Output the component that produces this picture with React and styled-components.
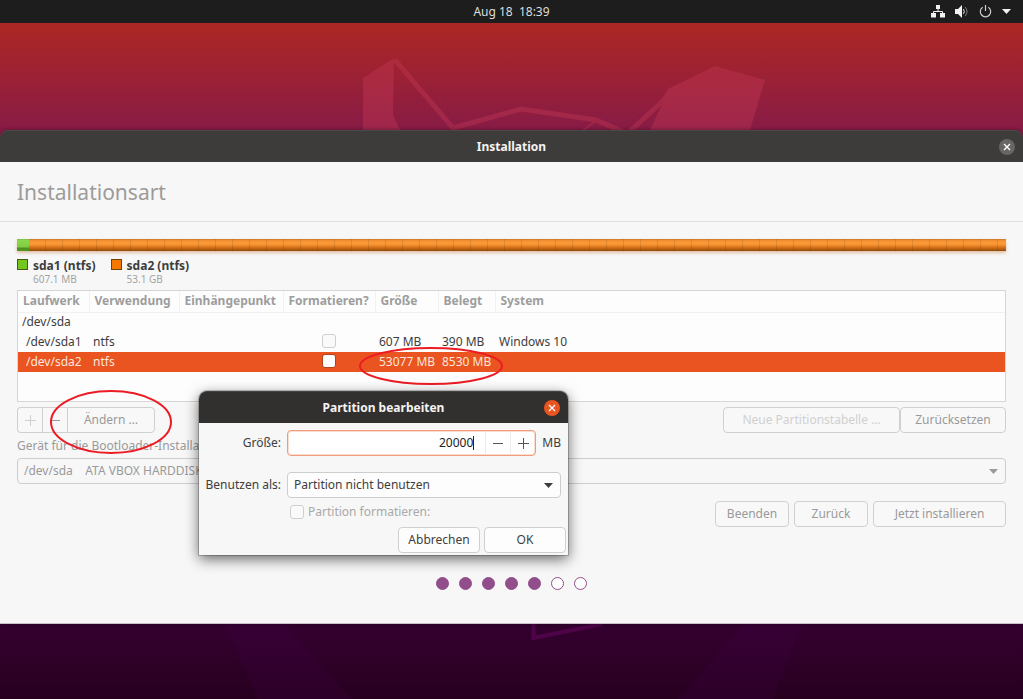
import React from "react";
import styled, { createGlobalStyle } from "styled-components";

const GlobalStyle = createGlobalStyle`
  *, *::before, *::after { box-sizing: border-box; }
  body {
    margin: 0;
    font: 12px/16px "Noto Sans", "Open Sans", sans-serif;
    color: #3d3d3d;
  }
  button, input, select { font: inherit; color: inherit; margin: 0; }
`;

const Desktop = styled.div`
  min-height: 100vh;
  display: flex;
  flex-direction: column;
  background: linear-gradient(#ad2825 22px, #9f2231 66px, #881b46 130px, #350030 624px, #27001f 100%);
  overflow: hidden;
`;

const TopBar = styled.header`
  height: 23px;
  flex: none;
  display: grid;
  grid-template-columns: 1fr auto 1fr;
  align-items: center;
  padding: 0 12px;
  background: #1d1d1d;
  color: #dedede;
`;

const Clock = styled.time`
  grid-column: 2;
  white-space: pre;
`;

const Indicators = styled.div`
  display: flex;
  justify-content: flex-end;
  align-items: center;
  gap: 10px;
  color: #f2f2f2;
`;

const TopArt = styled.svg`
  display: block;
  width: 100%;
  height: 107px;
  flex: none;
`;

const BottomArt = styled.svg`
  display: block;
  width: 100%;
  height: 75px;
  flex: none;
`;

const Window = styled.main`
  position: relative;
  flex: 1;
  display: flex;
  flex-direction: column;
  border-radius: 8px 8px 0 0;
  box-shadow: 0 0 4px rgba(0, 0, 0, 0.4);
`;

const TitleBar = styled.header`
  display: grid;
  grid-template-columns: 1fr auto 1fr;
  align-items: center;
  height: 32px;
  padding: 0 8px;
  border-radius: 8px 8px 0 0;
  background: ${(p) => (p.$active ? "#322f2f" : "#3e3c3a")};
  border-top: 1px solid ${(p) => (p.$active ? "#454242" : "#4a4846")};
  color: #f4f3f2;
`;

const TitleText = styled.h2`
  grid-column: 2;
  margin: 0;
  font-size: 12px;
  line-height: 16px;
  font-weight: 700;
`;

const CloseButton = styled.button`
  justify-self: end;
  display: grid;
  place-items: center;
  width: 16px;
  height: 16px;
  padding: 0;
  border: 0;
  border-radius: 50%;
  color: #fff;
  background: ${(p) => (p.$active ? "#e95420" : "#686664")};
`;

const Heading = styled.h1`
  margin: 0;
  height: 60px;
  padding: 0 17px;
  font-size: 21px;
  line-height: 60px;
  font-weight: 400;
  color: #9d9b99;
  background: #f7f7f7;
  border-bottom: 1px solid #dfdfdf;
`;

const Body = styled.div`
  flex: 1;
  display: flex;
  flex-direction: column;
  padding: 17px 17px 0;
  background: #f7f7f7;
  border-bottom: 1px solid #c9c0c9;
`;

const DiskBar = styled.div`
  display: flex;
  height: 12px;
  box-shadow: 0 2px 3px rgba(190, 110, 40, 0.4);
`;

const Segment = styled.div`
  flex: ${(p) => p.$flex};
  background:
    repeating-linear-gradient(90deg, transparent 0 16px, rgba(80, 40, 0, 0.14) 16px 17px),
    ${(p) => p.$fill};
`;

const greenFill = "linear-gradient(#76b04a 0, #8ad84c 1px, #80cc40 8px, #4f8f20 9px, #4f9a20 100%)";
const orangeFill = "linear-gradient(#bd7427 0, #f08c2c 1px, #fb9a3c 4px, #f5912f 6px, #d9761c 8px, #a8560c 11px, #8f4a0a 100%)";

const Legend = styled.ul`
  display: flex;
  gap: 15px;
  margin: 7px 0 0;
  padding: 0;
  height: 32px;
  list-style: none;
`;

const LegendItem = styled.li`
  display: flex;
  gap: 5px;
`;

const Swatch = styled.span`
  width: 11px;
  height: 11px;
  margin-top: 1px;
  border: 1px solid rgba(60, 40, 10, 0.7);
  background: ${(p) => p.$color};
`;

const LegendText = styled.div`
  display: flex;
  flex-direction: column;
`;

const LegendName = styled.strong`
  line-height: 15px;
`;

const LegendSize = styled.span`
  font-size: 10px;
  line-height: 12px;
  color: #a3a3a3;
`;

const TableFrame = styled.div`
  position: relative;
  height: 112px;
  border: 1px solid #d6d6d6;
  background: #fdfdfd;
`;

const Table = styled.table`
  width: 100%;
  table-layout: fixed;
  border-collapse: collapse;
  white-space: nowrap;
`;

const Col = styled.col`
  width: ${(p) => p.$width};
`;

const HeadCell = styled.th`
  height: 21px;
  padding: 0 0 0 5px;
  text-align: left;
  font-weight: 700;
  color: #9d9d9d;
  border-bottom: 1px solid #f1f1f1;
  border-right: 1px solid #f1f1f1;

  &:last-child { border-right: 0; }
`;

const Row = styled.tr`
  background: ${(p) => (p.$selected ? "#e95420" : "transparent")};
  color: ${(p) => (p.$selected ? "#fbe6dd" : "#3d3d3d")};
`;

const Cell = styled.td`
  height: 20px;
  padding: 0 0 0 ${(p) => (p.$nested ? "8px" : "4px")};
`;

const CheckCell = styled(Cell)`
  padding: 0;
  text-align: center;
`;

const CheckBox = styled.input`
  appearance: none;
  display: inline-block;
  vertical-align: top;
  width: 14px;
  height: 14px;
  flex: none;
  border: 1px solid ${(p) => (p.$strong ? "#b0431c" : "#cfcfcf")};
  border-radius: 3px;
  background: ${(p) => (p.$strong ? "#fff" : "#fafafa")};
`;

const Toolbar = styled.div`
  position: relative;
  display: flex;
  justify-content: space-between;
  margin-top: 5px;
`;

const ButtonGroup = styled.div`
  display: flex;
`;

const Button = styled.button`
  display: grid;
  place-items: center;
  height: 26px;
  width: ${(p) => p.$width};
  padding: 0;
  border: 1px solid #d0d0d0;
  border-radius: 4px;
  background: ${(p) => (p.$solid ? "#fdfdfd" : "#f8f8f8")};
  color: ${(p) => (p.$solid ? "#3d3d3d" : p.$faint ? "#d0d0d0" : "#9a9a9a")};
  white-space: nowrap;
`;

const JoinedButton = styled(Button)`
  border-radius: ${(p) => (p.$end === "left" ? "4px 0 0 4px" : p.$end === "right" ? "0 4px 4px 0" : "0")};
  border-right-width: ${(p) => (p.$end === "right" ? "1px" : "0")};
`;

const FieldLabel = styled.label`
  margin-top: 4px;
  line-height: 18px;
  color: #9a9a9a;
  white-space: nowrap;
`;

const SelectWrap = styled.div`
  display: grid;
  align-items: center;
  margin-top: ${(p) => p.$top || "0"};
  color: ${(p) => (p.$muted ? "#9a9a9a" : "#3d3d3d")};

  & > * { grid-area: 1 / 1; }
  & > svg { justify-self: end; margin-right: 8px; pointer-events: none; }
`;

const Select = styled.select`
  appearance: none;
  width: 100%;
  height: 26px;
  padding: 0 24px 0 6px;
  border: 1px solid #cdcdcd;
  border-radius: 4px;
  background: ${(p) => (p.$muted ? "#f7f7f7" : "#fdfdfd")};
  white-space: pre;
`;

const Actions = styled.div`
  display: flex;
  justify-content: flex-end;
  gap: 5px;
  margin-top: 17px;
`;

const Steps = styled.ol`
  display: flex;
  justify-content: center;
  gap: 10px;
  margin: 50px 0 33px;
  padding: 0;
  list-style: none;
`;

const Step = styled.li`
  width: 13px;
  height: 13px;
  border: 1px solid #924d8b;
  border-radius: 50%;
  background: ${(p) => (p.$done ? "#924d8b" : "#fff")};
`;

const Dialog = styled.section`
  position: absolute;
  left: 199px;
  top: 261px;
  width: 369px;
  border-radius: 8px 8px 0 0;
  background: #f7f7f7;
  box-shadow: 0 0 0 1px rgba(0, 0, 0, 0.2), 0 4px 14px rgba(0, 0, 0, 0.6);
`;

const Form = styled.form`
  display: grid;
  grid-template-columns: 82px 1fr;
  column-gap: 6px;
  align-items: center;
  padding: 7px 7px 0 0;
`;

const DialogLabel = styled.label`
  margin-top: ${(p) => p.$top || "0"};
  text-align: right;
  white-space: nowrap;
`;

const SizeRow = styled.div`
  display: flex;
  align-items: center;
  gap: 6px;
`;

const Spin = styled.div`
  display: flex;
  align-items: center;
  flex: 1;
  height: 26px;
  border: 1px solid #f09c7b;
  border-radius: 4px;
  background: #fff;
  box-shadow: inset 0 0 0 1px #fbdccf;
`;

const SpinInput = styled.input`
  flex: 1;
  min-width: 0;
  padding: 0;
  border: 0;
  outline: 0;
  background: transparent;
  text-align: right;
  color: #222;
`;

const Caret = styled.span`
  width: 1px;
  height: 14px;
  margin-right: 11px;
  background: #222;
`;

const SpinButton = styled.button`
  display: grid;
  place-items: center;
  width: 25px;
  height: 22px;
  padding: 0;
  border: 0;
  border-left: 1px solid #ececec;
  background: transparent;
  color: #555;
`;

const CheckLabel = styled.label`
  grid-column: 2;
  display: flex;
  align-items: center;
  gap: 4px;
  height: 16px;
  margin: 6px 0 7px 3px;
  color: #a9a9a9;
`;

const DialogActions = styled.div`
  display: flex;
  justify-content: flex-end;
  gap: 4px;
  padding: 0 2px 2px 0;
`;

const Marker = styled.svg`
  position: absolute;
  left: ${(p) => p.$left};
  top: ${(p) => p.$top};
  overflow: visible;
  pointer-events: none;
  fill: none;
  stroke: #ec1c24;
  stroke-width: 2;
`;

const Cross = () => (
  <svg width="8" height="8" viewBox="0 0 8 8" stroke="currentColor" strokeWidth="1.4" aria-hidden="true">
    <path d="M1 1l6 6M7 1L1 7" />
  </svg>
);

const Arrow = () => (
  <svg width="9" height="5" viewBox="0 0 9 5" fill="currentColor" aria-hidden="true">
    <path d="M0 0h9L4.5 5z" />
  </svg>
);

const Plus = () => (
  <svg width="11" height="11" viewBox="0 0 11 11" stroke="currentColor" aria-hidden="true">
    <path d="M0 5.5h11M5.5 0v11" />
  </svg>
);

const Minus = () => (
  <svg width="10" height="11" viewBox="0 0 10 11" stroke="currentColor" aria-hidden="true">
    <path d="M0 5.5h10" />
  </svg>
);

const NetworkIcon = () => (
  <svg width="14" height="13" viewBox="0 0 14 13" fill="currentColor" aria-hidden="true">
    <path d="M5 0h4v4H5zM0 8h5v4.500H0zM9 8h5v4.500H9z" />
    <path d="M7 4v2.500M2.500 8.500v-2h9v2" fill="none" stroke="currentColor" />
  </svg>
);

const VolumeIcon = () => (
  <svg width="14" height="13" viewBox="0 0 14 13" aria-hidden="true">
    <path d="M0 4h3l4-4v13L3 9H0z" fill="currentColor" />
    <path d="M8.500 4.200q1.500 2.300 0 4.600" fill="none" stroke="currentColor" />
    <path d="M10.300 2.200q3.400 4.300 0 8.600" fill="none" stroke="#888" />
  </svg>
);

const PowerIcon = () => (
  <svg width="13" height="13" viewBox="0 0 13 13" fill="none" stroke="#cfcfcf" strokeWidth="1.200" aria-hidden="true">
    <path d="M3.700 2.200a5.200 5.200 0 1 0 5.600 0M6.500 0v6" />
  </svg>
);

const columns = [
  ["Laufwerk", "71px"],
  ["Verwendung", "90px"],
  ["Einhängepunkt", "104px"],
  ["Formatieren?", "92px"],
  ["Größe", "63px"],
  ["Belegt", "57px"],
  ["System", "auto"],
];

const partitions = [
  { device: "/dev/sda1", use: "ntfs", size: "607 MB", used: "390 MB", system: "Windows 10" },
  { device: "/dev/sda2", use: "ntfs", size: "53077 MB", used: "8530 MB", system: "", selected: true },
];

const steps = [true, true, true, true, true, false, false];

export default function App() {
  return (
    <Desktop>
      <GlobalStyle />
      <TopBar>
        <Clock>{"Aug 18  18:39"}</Clock>
        <Indicators>
          <NetworkIcon />
          <VolumeIcon />
          <PowerIcon />
          <Arrow />
        </Indicators>
      </TopBar>

      <TopArt viewBox="0 0 1023 107" preserveAspectRatio="xMidYMax slice" aria-hidden="true">
        <g opacity="0.36" fill="#c93c58" stroke="none">
          <path d="M363 55L394 35l-1 57 7 15h-37z" />
          <path d="M670 65L715 43l50 14-15 50H650l14-30z" />
          <g fill="none" stroke="#c93c58" strokeWidth="5">
            <path d="M395 37l58 68 68-19 75 11 32 14M671 66l-7 11-36 33" />
            <path d="M596 98l-14 10" strokeWidth="2" />
          </g>
        </g>
      </TopArt>

      <Window>
        <TitleBar>
          <TitleText>Installation</TitleText>
          <CloseButton aria-label="Schließen"><Cross /></CloseButton>
        </TitleBar>
        <Heading>Installationsart</Heading>
        <Body>
          <DiskBar>
            <Segment $flex="0 0 12px" $fill={greenFill} />
            <Segment $flex="1" $fill={orangeFill} />
          </DiskBar>
          <Legend>
            <LegendItem>
              <Swatch $color="#73c81e" />
              <LegendText>
                <LegendName>sda1 (ntfs)</LegendName>
                <LegendSize>607.1 MB</LegendSize>
              </LegendText>
            </LegendItem>
            <LegendItem>
              <Swatch $color="#f57900" />
              <LegendText>
                <LegendName>sda2 (ntfs)</LegendName>
                <LegendSize>53.1 GB</LegendSize>
              </LegendText>
            </LegendItem>
          </Legend>

          <TableFrame>
            <Table>
              <colgroup>
                {columns.map(([name, width]) => <Col key={name} $width={width} />)}
              </colgroup>
              <thead>
                <tr>
                  {columns.map(([name]) => <HeadCell key={name}>{name}</HeadCell>)}
                </tr>
              </thead>
              <tbody>
                <Row><Cell colSpan={7}>/dev/sda</Cell></Row>
                {partitions.map((p) => (
                  <Row key={p.device} $selected={p.selected}>
                    <Cell $nested>{p.device}</Cell>
                    <Cell>{p.use}</Cell>
                    <Cell />
                    <CheckCell>
                      <CheckBox type="checkbox" $strong={p.selected} aria-label={`${p.device} formatieren`} />
                    </CheckCell>
                    <Cell>{p.size}</Cell>
                    <Cell>{p.used}</Cell>
                    <Cell>{p.system}</Cell>
                  </Row>
                ))}
              </tbody>
            </Table>
            <Marker $left="342px" $top="57px" width="142" height="37" aria-hidden="true">
              <ellipse cx="71" cy="18" rx="71" ry="18" />
            </Marker>
          </TableFrame>

          <Toolbar>
            <ButtonGroup>
              <JoinedButton $end="left" $width="25px" $faint aria-label="Hinzufügen"><Plus /></JoinedButton>
              <JoinedButton $width="25px" aria-label="Entfernen"><Minus /></JoinedButton>
              <JoinedButton $end="right" $width="88px">Ändern …</JoinedButton>
            </ButtonGroup>
            <ButtonGroup>
              <Button $width="177px" $faint>Neue Partitionstabelle …</Button>
              <Button $width="106px">Zurücksetzen</Button>
            </ButtonGroup>
            <Marker $left="34px" $top="-16px" width="121" height="62" aria-hidden="true">
              <ellipse cx="60" cy="31" rx="60" ry="31" />
            </Marker>
          </Toolbar>

          <FieldLabel htmlFor="boot-device">Gerät für die Bootloader-Installation:</FieldLabel>
          <SelectWrap $muted $top="3px">
            <Select id="boot-device" $muted>
              <option>{"/dev/sda\u00a0\u00a0\u00a0\u00a0ATA VBOX HARDDISK (53.7 GB)"}</option>
            </Select>
            <Arrow />
          </SelectWrap>

          <Actions>
            <Button $width="74px">Beenden</Button>
            <Button $width="74px">Zurück</Button>
            <Button $width="133px">Jetzt installieren</Button>
          </Actions>

          <Steps aria-label="Fortschritt">
            {steps.map((done, i) => <Step key={i} $done={done} />)}
          </Steps>
        </Body>

        <Dialog role="dialog" aria-labelledby="dialog-title">
          <TitleBar $active>
            <TitleText id="dialog-title">Partition bearbeiten</TitleText>
            <CloseButton $active aria-label="Dialog schließen"><Cross /></CloseButton>
          </TitleBar>
          <Form>
            <DialogLabel htmlFor="size">Größe:</DialogLabel>
            <SizeRow>
              <Spin>
                <SpinInput id="size" type="text" inputMode="numeric" defaultValue="20000" />
                <Caret />
                <SpinButton type="button" aria-label="Verringern"><Minus /></SpinButton>
                <SpinButton type="button" aria-label="Erhöhen"><Plus /></SpinButton>
              </Spin>
              <span>MB</span>
            </SizeRow>
            <DialogLabel htmlFor="use-as" $top="16px">Benutzen als:</DialogLabel>
            <SelectWrap $top="16px">
              <Select id="use-as">
                <option>Partition nicht benutzen</option>
              </Select>
              <Arrow />
            </SelectWrap>
            <CheckLabel>
              <CheckBox type="checkbox" disabled />
              Partition formatieren:
            </CheckLabel>
          </Form>
          <DialogActions>
            <Button $solid $width="82px">Abbrechen</Button>
            <Button $solid $width="82px">OK</Button>
          </DialogActions>
        </Dialog>
      </Window>

      <BottomArt viewBox="0 0 1023 75" preserveAspectRatio="xMidYMin slice" aria-hidden="true">
        <g fill="#4a0058" fillOpacity="0.16">
          <path d="M224 0h60l68 75h-94z" />
          <path d="M744 0h58l-29 75h-95z" />
        </g>
        <path d="M533.500 0v14L602 0" fill="none" stroke="#4f0449" strokeWidth="4" />
      </BottomArt>
    </Desktop>
  );
}
